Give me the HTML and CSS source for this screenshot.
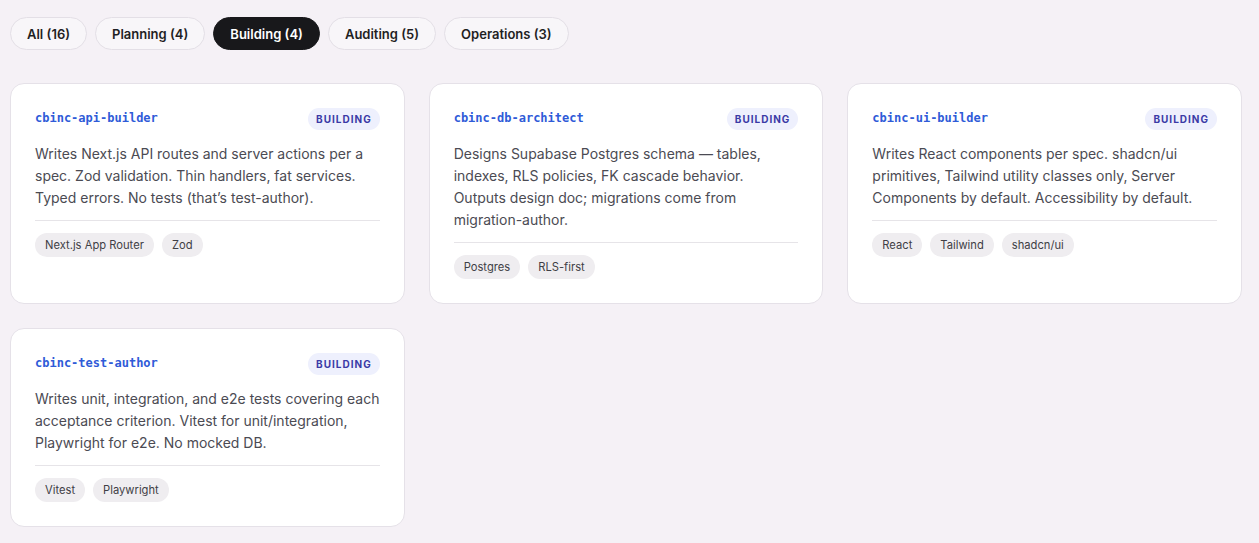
FILE: index.html
```html
<!DOCTYPE html>
<html lang="en">
<head>
    <meta charset="UTF-8">
    <meta name="viewport" content="width=device-width, initial-scale=1.0">
    <title>Agents - Building</title>
    <link rel="stylesheet" href="styles.css">
</head>
<body>
    <div class="filters">
        <button class="filter">All (16)</button>
        <button class="filter">Planning (4)</button>
        <button class="filter active">Building (4)</button>
        <button class="filter">Auditing (5)</button>
        <button class="filter">Operations (3)</button>
    </div>

    <div class="agent-grid">
        <div class="agent-card">
            <div class="card-head">
                <span class="agent-name">cbinc-api-builder</span>
                <span class="badge">BUILDING</span>
            </div>
            <p class="agent-desc">Writes Next.js API routes and server actions per a spec. Zod validation. Thin handlers, fat services. Typed errors. No tests (that’s test-author).</p>
            <div class="tags">
                <span class="tag">Next.js App Router</span>
                <span class="tag">Zod</span>
            </div>
        </div>

        <div class="agent-card">
            <div class="card-head">
                <span class="agent-name">cbinc-db-architect</span>
                <span class="badge">BUILDING</span>
            </div>
            <p class="agent-desc">Designs Supabase Postgres schema — tables, indexes, RLS policies, FK cascade behavior. Outputs design doc; migrations come from migration-author.</p>
            <div class="tags">
                <span class="tag">Postgres</span>
                <span class="tag">RLS-first</span>
            </div>
        </div>

        <div class="agent-card">
            <div class="card-head">
                <span class="agent-name">cbinc-ui-builder</span>
                <span class="badge">BUILDING</span>
            </div>
            <p class="agent-desc">Writes React components per spec. shadcn/ui primitives, Tailwind utility classes only, Server Components by default. Accessibility by default.</p>
            <div class="tags">
                <span class="tag">React</span>
                <span class="tag">Tailwind</span>
                <span class="tag">shadcn/ui</span>
            </div>
        </div>

        <div class="agent-card">
            <div class="card-head">
                <span class="agent-name">cbinc-test-author</span>
                <span class="badge">BUILDING</span>
            </div>
            <p class="agent-desc">Writes unit, integration, and e2e tests covering each acceptance criterion. Vitest for unit/integration, Playwright for e2e. No mocked DB.</p>
            <div class="tags">
                <span class="tag">Vitest</span>
                <span class="tag">Playwright</span>
            </div>
        </div>
    </div>
</body>
</html>
```

FILE: styles.css
```css
body {
    font-family: Inter, "Noto Sans", sans-serif;
    margin: 0;
    padding: 17px 17px 16px 10px;
    background-color: #f5f1f6;
    color: #27272a;
}
.filters {
    display: flex;
    gap: 8px;
}
.filter {
    height: 33px;
    padding: 0 16px;
    border: 1px solid #e3dfe6;
    border-radius: 999px;
    background-color: #f8f6f9;
    font-family: inherit;
    font-size: 13px;
    font-weight: 600;
    color: #1f1f23;
    cursor: pointer;
}
.filter.active {
    background-color: #18181b;
    border-color: #18181b;
    color: white;
}
.agent-grid {
    display: grid;
    grid-template-columns: repeat(3, 1fr);
    column-gap: 24px;
    row-gap: 24px;
    margin-top: 33px;
}
.agent-card {
    background-color: white;
    border: 1px solid #e5e1e8;
    border-radius: 14px;
    padding: 24px;
}
.card-head {
    display: flex;
    justify-content: space-between;
    align-items: flex-start;
}
.agent-name {
    font-family: "DejaVu Sans Mono", monospace;
    font-size: 12px;
    font-weight: bold;
    color: #2f5bd8;
    line-height: 20px;
}
.badge {
    height: 22px;
    line-height: 22px;
    padding: 0 8px;
    border-radius: 999px;
    background-color: #eef0fd;
    color: #3b3aa6;
    font-size: 10px;
    font-weight: 700;
    letter-spacing: 1px;
}
.agent-desc {
    margin: 13px 0 0;
    font-size: 14px;
    line-height: 22px;
    color: #4b4b53;
}
.tags {
    display: flex;
    gap: 8px;
    margin-top: 11px;
    padding-top: 12px;
    border-top: 1px solid #e6e4e8;
}
.tag {
    height: 24px;
    line-height: 24px;
    padding: 0 10px;
    border-radius: 999px;
    background-color: #efedf0;
    color: #3f3f46;
    font-size: 11.2px;
}
```
